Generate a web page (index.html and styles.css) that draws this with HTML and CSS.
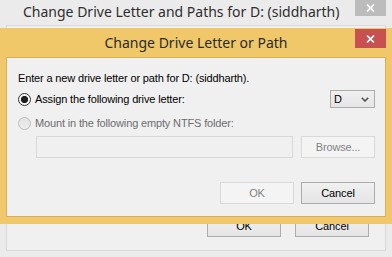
FILE: index.html
```html
<!DOCTYPE html>
<html>
<head>
<meta charset="utf-8">
<title>Change Drive Letter or Path</title>
<link rel="stylesheet" href="styles.css">
</head>
<body>
<div class="bgwin">
  <div class="bg-titlebar">
    <span class="bg-title">Change Drive Letter and Paths for D: (siddharth)</span>
    <span class="close close-inactive"><svg width="9" height="8" viewBox="0 0 9 8"><path d="M1 0.5 L8 7.5 M8 0.5 L1 7.5" stroke="#fff" stroke-width="1.7" fill="none"/></svg></span>
  </div>
  <div class="bg-client">
    <div class="bg-buttons">
      <span class="btn">OK</span>
      <span class="btn">Cancel</span>
    </div>
  </div>
</div>

<div class="dialog">
  <div class="dlg-titlebar">
    <span class="dlg-title">Change Drive Letter or Path</span>
    <span class="close close-active"><svg width="9" height="8" viewBox="0 0 9 8"><path d="M1 0.5 L8 7.5 M8 0.5 L1 7.5" stroke="#fff" stroke-width="1.7" fill="none"/></svg></span>
  </div>
  <div class="dlg-client">
    <p class="prompt">Enter a new drive letter or path for D: (siddharth).</p>
    <div class="row row-assign">
      <span class="radio radio-checked"></span>
      <span class="label">Assign the following drive letter:</span>
      <span class="combo"><span class="combo-value">D</span><svg class="chev" width="8" height="5" viewBox="0 0 8 5"><path d="M0.8 0.8 L4 4 L7.2 0.8" stroke="#4a4a4a" stroke-width="1.5" fill="none"/></svg></span>
    </div>
    <div class="row row-mount">
      <span class="radio radio-disabled"></span>
      <span class="label label-disabled">Mount in the following empty NTFS folder:</span>
    </div>
    <div class="row row-path">
      <span class="textbox"></span>
      <span class="btn btn-disabled">Browse...</span>
    </div>
    <div class="row row-actions">
      <span class="btn btn-disabled">OK</span>
      <span class="btn">Cancel</span>
    </div>
  </div>
</div>
</body>
</html>
```

FILE: styles.css
```css
* { box-sizing: border-box; }

html, body {
  margin: 0;
  padding: 0;
}

body {
  width: 392px;
  height: 257px;
  overflow: hidden;
  position: relative;
  background: #ebebeb;
  font-family: "Liberation Sans", Arial, sans-serif;
  font-size: 11px;
  letter-spacing: -0.15px;
  color: #000;
}

/* ---------- background window ---------- */
.bgwin {
  display: flex;
  flex-direction: column;
  height: 257px;
}

.bg-titlebar {
  display: flex;
  align-items: flex-start;
  height: 25px;
}

.bg-title {
  font-family: "Noto Sans", "Open Sans", sans-serif;
  font-size: 14px;
  letter-spacing: 0;
  line-height: 20px;
  color: #2e2e2e;
  padding-left: 23px;
  margin-top: 2px;
  white-space: nowrap;
}

.close {
  display: flex;
  align-items: center;
  justify-content: center;
  width: 31px;
}

.close-inactive {
  margin-left: auto;
  margin-right: 6px;
  height: 16px;
  background: #bcbcbc;
}

.bg-client {
  margin: 0 6px;
  height: 226px;
  border: 1px solid #dadada;
  background: #f0f0f0;
  display: flex;
  flex-direction: column;
  justify-content: flex-end;
}

.bg-buttons {
  display: flex;
  justify-content: flex-end;
  gap: 14px;
  padding: 0 16px 13px 0;
}

/* ---------- buttons ---------- */
.btn {
  display: flex;
  align-items: center;
  justify-content: center;
  width: 74px;
  height: 22px;
  border: 1px solid #acacac;
  background: linear-gradient(#f0f0f0, #e5e5e5);
  color: #000;
  line-height: 13px;
}

.btn-disabled {
  border-color: #d9d9d9;
  background: #f4f4f4;
  color: #838383;
}

/* ---------- front dialog ---------- */
.dialog {
  position: absolute;
  left: -1px;
  top: 28px;
  width: 394px;
  height: 196px;
  background: #f0c869;
  padding: 0 7px 7px;
  display: flex;
  flex-direction: column;
}

.dlg-titlebar {
  display: grid;
  grid-template-columns: 1fr auto 1fr;
  align-items: start;
  height: 29px;
}

.dlg-title {
  grid-column: 2;
  font-family: "Noto Sans", "Open Sans", sans-serif;
  font-size: 14px;
  letter-spacing: 0;
  line-height: 20px;
  color: #2b2b2b;
  margin-top: 5px;
  white-space: nowrap;
}

.close-active {
  grid-column: 3;
  justify-self: end;
  height: 19px;
  margin-top: 1px;
  background: #c75050;
}

.dlg-client {
  flex: 1;
  border: 1px solid #d6b15d;
  background: #f0f0f0;
  padding: 0 10px 0 11px;
  display: flex;
  flex-direction: column;
}

.prompt {
  margin: 14px 0 0;
  line-height: 13px;
  white-space: nowrap;
}

.row {
  display: flex;
  align-items: center;
}

.row-assign {
  margin-top: 5px;
  height: 18px;
}

.label {
  line-height: 13px;
  margin-left: 4px;
  white-space: nowrap;
}

.label-disabled {
  color: #6d6d6d;
}

.radio {
  width: 13px;
  height: 13px;
  border-radius: 50%;
  flex: none;
}

.radio-checked {
  border: 1px solid #333;
  background: radial-gradient(circle, #1e1e1e 0, #1e1e1e 3.3px, #f4f4f4 3.9px);
}

.radio-disabled {
  border: 1px solid #bcbcbc;
  background: linear-gradient(#e4e4e4, #ececec);
}

.combo {
  margin-left: auto;
  width: 45px;
  height: 18px;
  border: 1px solid #acacac;
  background: linear-gradient(#f0f0f0, #e5e5e5);
  display: flex;
  align-items: center;
  padding: 0 5px 0 3px;
}

.combo-value {
  line-height: 13px;
}

.chev {
  margin-left: auto;
}

.row-mount {
  margin-top: 9px;
  height: 13px;
}

.row-path {
  margin-top: 6px;
  padding-left: 18px;
  gap: 8px;
}

.textbox {
  width: 257px;
  height: 22px;
  border: 1px solid #d9d9d9;
  background: #f0f0f0;
}

.row-actions {
  margin-top: 24px;
  justify-content: flex-end;
  gap: 7px;
}
```
